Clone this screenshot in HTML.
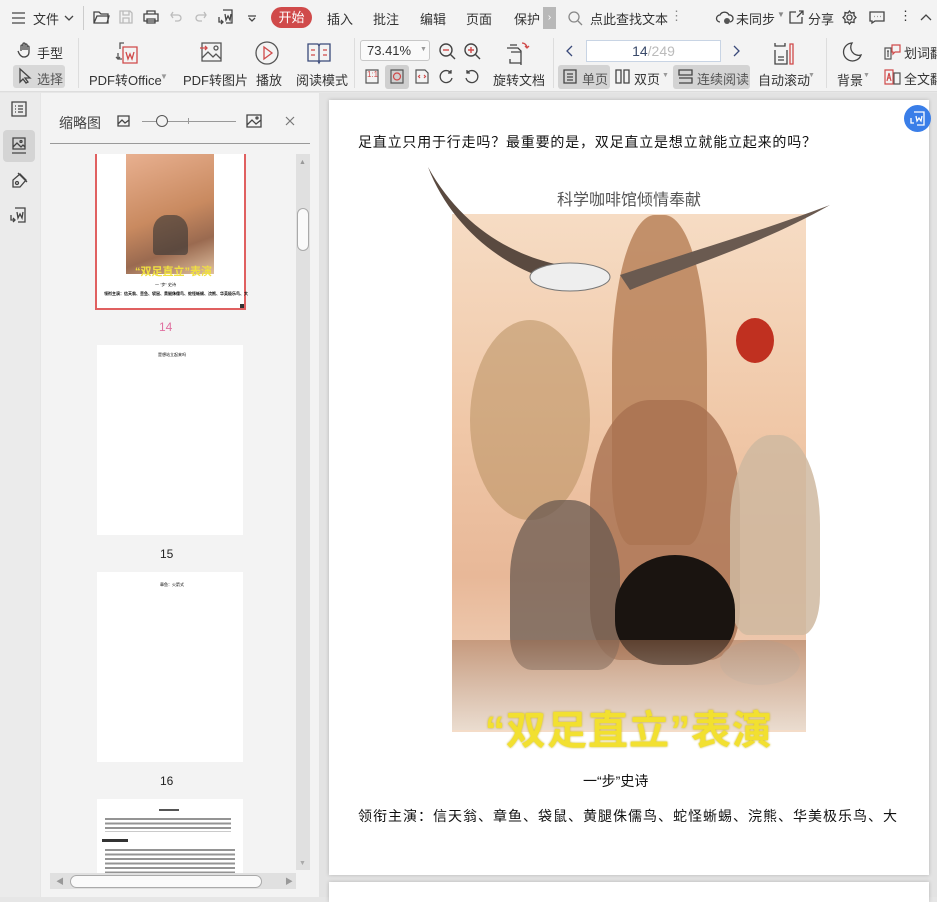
<!DOCTYPE html>
<html><head><meta charset="utf-8">
<style>
*{margin:0;padding:0;box-sizing:border-box}
body{width:937px;height:897px;overflow:hidden;background:#e6e6e6;font-family:"Liberation Sans","Noto Sans CJK SC",sans-serif;color:#333;font-size:13px;position:relative}
.a{position:absolute;white-space:nowrap}
svg{position:absolute;overflow:visible}
.ic{fill:none;stroke:#444;stroke-width:1.3}
</style></head><body>
<!-- top bar -->
<div class="a" style="left:0;top:0;width:937px;height:92px;background:#f3f3f3;border-bottom:1px solid #ddd"></div>
<svg style="left:12px;top:12px" width="14" height="12" class="ic"><path d="M0 1H13M0 6H13M0 11H13"/></svg>
<div class="a" style="left:33px;top:9px">文件</div>
<svg style="left:64px;top:15px" width="10" height="6" class="ic"><path d="M1 1L5 5L9 1"/></svg>
<div class="a" style="left:83px;top:6px;width:1px;height:24px;background:#ccc"></div>
<svg style="left:93px;top:10px" width="17" height="14" class="ic"><path d="M1 2H6L8 4H15V13H1Z M1 13L4 6H16L14 13"/></svg>
<svg style="left:119px;top:10px" width="14" height="14" class="ic"><path stroke="#bbb" d="M1 1H11L13 3V13H1Z M4 1V5H10V1 M4 13V8H10V13"/></svg>
<svg style="left:143px;top:10px" width="16" height="14" class="ic"><path d="M4 4V1H12V4 M1 4H15V11H1Z M4 9H12V13H4Z"/></svg>
<svg style="left:170px;top:11px" width="12" height="11" fill="none" stroke="#bbb" stroke-width="1.3"><path d="M3 1L1 4L3 7 M1 4H8A3 3 0 0 1 8 10H5"/></svg>
<svg style="left:195px;top:11px" width="12" height="11" fill="none" stroke="#bbb" stroke-width="1.3"><path d="M9 1L11 4L9 7 M11 4H4A3 3 0 0 0 4 10H7"/></svg>
<svg style="left:218px;top:9px" width="16" height="16" class="ic"><path d="M5 1H14V14H8 M7 5L8 11L10 7L12 11L13 5 M1 8V13H5 M3 11L5 13L3 15"/></svg>
<svg style="left:247px;top:15px" width="10" height="7" class="ic"><path d="M1 1H9 M2 3L5 6L8 3"/></svg>
<div class="a" style="left:271px;top:7px;width:41px;height:21px;border-radius:11px;background:#d04a4a;color:#fff;text-align:center;line-height:21px;font-size:13px">开始</div>
<div class="a" style="left:327px;top:9px">插入</div>
<div class="a" style="left:373px;top:9px">批注</div>
<div class="a" style="left:420px;top:9px">编辑</div>
<div class="a" style="left:466px;top:9px">页面</div>
<div class="a" style="left:514px;top:9px">保护</div>
<div class="a" style="left:543px;top:7px;width:13px;height:22px;background:#b8b8b8;color:#fff;font-size:10px;text-align:center;line-height:22px">›</div>
<svg style="left:568px;top:11px" width="15" height="15" fill="none" stroke="#888" stroke-width="1.3"><circle cx="6" cy="6" r="5"/><path d="M10 10L14 14"/></svg>
<div class="a" style="left:590px;top:9px">点此查找文本</div>
<div class="a" style="left:670px;top:8px;color:#888">⋮</div>
<svg style="left:716px;top:10px" width="16" height="14" class="ic"><path d="M4 12A3.5 3.5 0 0 1 4 5A5 5 0 0 1 13 5A3.5 3.5 0 0 1 14 12"/><circle cx="11" cy="11" r="3" fill="#555" stroke="none"/></svg>
<div class="a" style="left:736px;top:9px">未同步</div>
<div class="a" style="left:777px;top:10px;font-size:8px;color:#888">▼</div>
<svg style="left:789px;top:10px" width="15" height="14" class="ic"><path d="M7 2H1V13H13V7 M8 7L14 1 M10 1H14V5"/></svg>
<div class="a" style="left:808px;top:9px">分享</div>
<svg style="left:842px;top:10px" width="15" height="15" class="ic"><circle cx="7.5" cy="7.5" r="2.5"/><path d="M7.5 1L9 3L12 2.5L12 5.5L14 7.5L12 9.5L12 12.5L9 12L7.5 14L6 12L3 12.5L3 9.5L1 7.5L3 5.5L3 2.5L6 3Z"/></svg>
<svg style="left:869px;top:11px" width="16" height="13" class="ic"><path d="M1 1H15V10H6L3 12V10H1Z M5 5.5H5.5M8 5.5H8.5M11 5.5H11.5"/></svg>
<div class="a" style="left:899px;top:8px">⋮</div>
<svg style="left:920px;top:14px" width="12" height="7" class="ic"><path d="M1 6L6 1L11 6"/></svg>

<!-- ribbon row -->
<svg style="left:17px;top:42px" width="16" height="16" class="ic"><path d="M4 9V4A1 1 0 0 1 6 4V8V2A1 1 0 0 1 8 2V8V3A1 1 0 0 1 10 3V8V5A1 1 0 0 1 12 5V10C12 13 10 15 7 15C4 15 2 12 1 9"/></svg>
<div class="a" style="left:37px;top:43px">手型</div>
<div class="a" style="left:13px;top:65px;width:52px;height:23px;background:#d8d8d8;border-radius:3px"></div>
<svg style="left:19px;top:68px" width="12" height="16" class="ic"><path d="M1 1V14L4 11L7 15L9 14L6 10H11Z"/></svg>
<div class="a" style="left:37px;top:69px;color:#555">选择</div>
<div class="a" style="left:78px;top:38px;width:1px;height:50px;background:#ddd"></div>
<svg style="left:114px;top:41px" width="26" height="24" fill="none" stroke-width="1.3"><path stroke="#555" d="M6 8V2H10 M4 12V18H8 M2 16L4 18L6 16"/><path stroke="#d04a4a" d="M9 6H23V22H9Z M12 11L14 18L16 13L18 18L20 11"/></svg>
<div class="a" style="left:89px;top:70px">PDF转Office</div>
<div class="a" style="left:160px;top:72px;font-size:8px;color:#999">▼</div>
<svg style="left:200px;top:42px" width="22" height="20" fill="none" stroke-width="1.3"><path stroke="#555" d="M2 1H21V19H2Z M2 16L8 10L13 15L16 12L21 17"/><circle stroke="#555" cx="16" cy="6" r="2"/><path stroke="#d04a4a" d="M0 6H7 M5 4L7 6L5 8"/></svg>
<div class="a" style="left:183px;top:70px">PDF转图片</div>
<svg style="left:255px;top:41px" width="24" height="24" fill="none" stroke-width="1.3"><circle stroke="#555" cx="12" cy="12" r="11"/><path stroke="#d04a4a" d="M9 6L17 12L9 18Z"/></svg>
<div class="a" style="left:256px;top:70px">播放</div>
<svg style="left:307px;top:42px" width="24" height="22" fill="none" stroke-width="1.3"><path stroke="#3a4a7a" d="M1 2H11L12 4L13 2H23V19H13L12 21L11 19H1Z M12 4V19"/><path stroke="#d04a4a" d="M4 8H8M4 13H8M16 8H20M16 13H20"/></svg>
<div class="a" style="left:296px;top:70px">阅读模式</div>
<div class="a" style="left:354px;top:38px;width:1px;height:50px;background:#ddd"></div>
<div class="a" style="left:360px;top:40px;width:70px;height:21px;border:1px solid #c8c8c8;border-radius:3px;background:#fafafa;padding:2px 6px">73.41%</div>
<div class="a" style="left:420px;top:46px;font-size:7px;color:#999">▼</div>
<svg style="left:439px;top:43px" width="18" height="18" fill="none" stroke-width="1.4"><circle stroke="#444" cx="7" cy="7" r="6"/><path stroke="#444" d="M11 11L16 16"/><path stroke="#d04a4a" d="M4 7H10"/></svg>
<svg style="left:464px;top:43px" width="18" height="18" fill="none" stroke-width="1.4"><circle stroke="#444" cx="7" cy="7" r="6"/><path stroke="#444" d="M11 11L16 16"/><path stroke="#d04a4a" d="M4 7H10M7 4V10"/></svg>
<svg style="left:365px;top:69px" width="14" height="15" fill="none" stroke-width="1.2"><path stroke="#555" d="M1 1H13V14H1Z"/></svg><div class="a" style="left:367px;top:70px;font-size:8px;color:#d04a4a">1:1</div>
<div class="a" style="left:385px;top:65px;width:24px;height:24px;background:#cfcfcf;border-radius:3px"></div>
<svg style="left:390px;top:69px" width="14" height="15" fill="none" stroke-width="1.2"><path stroke="#555" d="M1 1H13V14H1Z"/><circle stroke="#d04a4a" cx="7" cy="7.5" r="3.5"/></svg>
<svg style="left:415px;top:69px" width="14" height="15" fill="none" stroke-width="1.2"><path stroke="#555" d="M1 1H10L13 4V14H1Z"/><path stroke="#d04a4a" d="M5 6L3.5 7.5L5 9M9 6L10.5 7.5L9 9"/></svg>
<svg style="left:439px;top:69px" width="15" height="15" class="ic"><path d="M12 4A6 6 0 1 0 13 9 M12 1V4H9"/></svg>
<svg style="left:464px;top:69px" width="15" height="15" class="ic"><path d="M3 4A6 6 0 1 1 2 9 M3 1V4H6"/></svg>
<svg style="left:505px;top:41px" width="26" height="25" class="ic"><path d="M2 7H13L16 10V22H5V18 M5 4H12 M6 11H16V24"/><path stroke="#d04a4a" d="M17 2A5 5 0 0 1 22 7 M20 5L22 7L24 5"/></svg>
<div class="a" style="left:493px;top:70px">旋转文档</div>
<div class="a" style="left:553px;top:38px;width:1px;height:50px;background:#ddd"></div>
<svg style="left:566px;top:45px" width="7" height="12" fill="none" stroke="#3a4a7a" stroke-width="1.3"><path d="M6 1L1 6L6 11"/></svg>
<div class="a" style="left:586px;top:40px;width:135px;height:22px;border:1px solid #c8d4e4;background:#fff;text-align:center;line-height:20px;font-size:14px;color:#3a4a6a">14<span style="color:#bbb">/249</span></div>
<svg style="left:733px;top:45px" width="7" height="12" fill="none" stroke="#3a4a7a" stroke-width="1.3"><path d="M1 1L6 6L1 11"/></svg>
<div class="a" style="left:558px;top:65px;width:52px;height:24px;background:#d3d3d3;border-radius:3px"></div>
<svg style="left:563px;top:69px" width="14" height="15" class="ic"><path d="M1 1H13V14H1Z M4 5H10M4 8H10M4 11H10"/></svg>
<div class="a" style="left:582px;top:69px;color:#555">单页</div>
<svg style="left:615px;top:69px" width="15" height="15" class="ic"><path d="M1 1H6V14H1Z M9 1H14V14H9Z"/></svg>
<div class="a" style="left:634px;top:69px">双页</div>
<div class="a" style="left:662px;top:72px;font-size:7px;color:#999">▼</div>
<div class="a" style="left:673px;top:65px;width:77px;height:24px;background:#d3d3d3;border-radius:3px"></div>
<svg style="left:678px;top:69px" width="15" height="15" class="ic"><path d="M1 1H14V6H1Z M1 9H14V14H1"/></svg>
<div class="a" style="left:697px;top:69px;color:#555">连续阅读</div>
<svg style="left:774px;top:42px" width="20" height="23" fill="none" stroke-width="1.3"><path stroke="#444" d="M1 1V4H11V1 M1 8V22H13V8 M4 15H10M4 18H10"/><path stroke="#d04a4a" d="M16 2H19V22H16Z"/></svg>
<div class="a" style="left:758px;top:70px">自动滚动</div>
<div class="a" style="left:808px;top:72px;font-size:7px;color:#999">▼</div>
<div class="a" style="left:826px;top:38px;width:1px;height:50px;background:#ddd"></div>
<svg style="left:842px;top:42px" width="20" height="21" class="ic"><path d="M10 1A9 9 0 1 0 19 13A8 8 0 0 1 10 1Z"/></svg>
<div class="a" style="left:837px;top:70px">背景</div>
<div class="a" style="left:863px;top:72px;font-size:7px;color:#999">▼</div>
<svg style="left:884px;top:44px" width="17" height="16" fill="none" stroke-width="1.2"><path stroke="#555" d="M1 4H7V15H1Z M3 7H5M4 7V13"/><path stroke="#d04a4a" d="M8 1H16V8H11L9 10V8H8Z"/></svg>
<div class="a" style="left:904px;top:43px">划词翻</div>
<svg style="left:884px;top:69px" width="17" height="16" fill="none" stroke-width="1.2"><path stroke="#d04a4a" d="M1 1H9V15H1Z M3 12L5 4L7 12M3.5 9H6.5"/><path stroke="#555" d="M10 4H16V15H10Z"/></svg>
<div class="a" style="left:904px;top:69px">全文翻</div>

<!-- left icon bar -->
<div class="a" style="left:0;top:93px;width:40px;height:804px;background:#ebebeb"></div>
<svg style="left:11px;top:101px" width="16" height="16" class="ic"><path d="M1 1H15V15H1Z M4 5H5M7 5H12M4 8H5M7 8H12M4 11H5M7 11H12"/></svg>
<div class="a" style="left:3px;top:130px;width:32px;height:32px;background:#d4d4d4;border-radius:4px"></div>
<svg style="left:11px;top:137px" width="16" height="18" class="ic"><path d="M2 1H14V12H2Z M2 10L6 6L10 10L12 8L14 10 M1 16H15"/><circle cx="10" cy="4.5" r="1"/></svg>
<svg style="left:11px;top:172px" width="16" height="17" class="ic"><path d="M9 2L15 8L9 15L2 15L2 8Z M7 1L16 10"/><circle cx="6" cy="11" r="1.5"/></svg>
<svg style="left:10px;top:207px" width="17" height="17" class="ic"><path d="M5 1H15V15H8 M7 5L8 11L10 7L12 11L13 5 M1 8V13H5 M3 11L5 13L3 15"/></svg>

<!-- thumbnail panel -->
<div class="a" style="left:41px;top:93px;width:278px;height:804px;background:#f3f3f3"></div>
<div class="a" style="left:59px;top:113px;font-size:14px;color:#444">缩略图</div>
<svg style="left:117px;top:115px" width="13" height="12" class="ic"><path d="M1 1H12V11H1Z M1 9L5 5L8 8L12 5"/></svg>
<div class="a" style="left:142px;top:121px;width:94px;height:1px;background:#999"></div>
<div class="a" style="left:156px;top:115px;width:12px;height:12px;border-radius:50%;border:1.3px solid #555;background:#f3f3f3"></div>
<div class="a" style="left:188px;top:118px;width:1px;height:6px;background:#999"></div>
<svg style="left:246px;top:114px" width="16" height="14" class="ic"><path d="M1 1H15V13H1Z M1 11L6 6L10 10L15 6"/><circle cx="11" cy="4" r="1"/></svg>
<svg style="left:285px;top:116px" width="10" height="10" fill="none" stroke="#777" stroke-width="1.2"><path d="M1 1L9 9M9 1L1 9"/></svg>
<div class="a" style="left:50px;top:143px;width:260px;height:1px;background:#999"></div>
<div class="a" style="left:296px;top:154px;width:14px;height:716px;background:#e0e0e0"></div>
<div class="a" style="left:299px;top:159px;font-size:7px;color:#999">▲</div>
<div class="a" style="left:297px;top:208px;width:12px;height:43px;background:#fafafa;border:1px solid #aaa;border-radius:6px"></div>
<div class="a" style="left:299px;top:860px;font-size:7px;color:#aaa">▼</div>
<div class="a" style="left:50px;top:873px;width:246px;height:16px;background:#e0e0e0"></div>
<div class="a" style="left:56px;top:876px;font-size:8px;color:#999">◀</div>
<div class="a" style="left:70px;top:875px;width:192px;height:13px;background:#fafafa;border:1px solid #aaa;border-radius:7px"></div>
<div class="a" style="left:285px;top:876px;font-size:8px;color:#999">▶</div>
<!-- thumb 14 -->
<div class="a" style="left:95px;top:154px;width:151px;height:156px;background:#fff;border:2px solid #e06060;border-top:none"></div>
<div class="a" style="left:126px;top:154px;width:88px;height:120px;background:linear-gradient(160deg,#e8b090,#c98a60 50%,#9a6a50 75%,#e0c0a0)"></div>
<div class="a" style="left:153px;top:215px;width:35px;height:40px;background:#333;border-radius:40% 40% 10% 10%;opacity:.6"></div>
<div class="a" style="left:135px;top:263px;font-size:11px;color:#f0e040;font-weight:bold">“双足直立”表演</div>
<div class="a" style="left:155px;top:282px;font-size:4px;color:#000">一 "步" 史诗</div>
<div class="a" style="left:104px;top:291px;font-size:4px;color:#000;font-weight:bold">领衔主演：信天翁、章鱼、袋鼠、黄腿侏儒鸟、蛇怪蜥蜴、浣熊、华美极乐鸟、大</div>
<div class="a" style="left:240px;top:304px;width:4px;height:4px;background:#333"></div>
<div class="a" style="left:159px;top:320px;color:#e070a0;font-size:12px">14</div>
<div class="a" style="left:97px;top:345px;width:146px;height:190px;background:#fff"></div>
<div class="a" style="left:158px;top:352px;font-size:4px;color:#000">是想站立起来吗</div>
<div class="a" style="left:160px;top:547px;color:#222;font-size:12px">15</div>
<div class="a" style="left:97px;top:572px;width:146px;height:190px;background:#fff"></div>
<div class="a" style="left:160px;top:582px;font-size:4px;color:#000">章鱼：火箭式</div>
<div class="a" style="left:160px;top:774px;color:#222;font-size:12px">16</div>
<div class="a" style="left:97px;top:799px;width:146px;height:74px;background:#fff;overflow:hidden">
<div style="position:absolute;left:62px;top:10px;width:20px;height:2px;background:#555"></div>
<div style="position:absolute;left:8px;top:19px;width:126px;height:14px;background:repeating-linear-gradient(#666 0 2px,transparent 2px 4.5px);opacity:.7"></div>
<div style="position:absolute;left:5px;top:40px;width:26px;height:3px;background:#333"></div>
<div style="position:absolute;left:8px;top:50px;width:130px;height:24px;background:repeating-linear-gradient(#666 0 2px,transparent 2px 4.5px);opacity:.7"></div>
</div>

<!-- page area -->
<div class="a" style="left:319px;top:93px;width:618px;height:804px;background:#e3e3e3"></div>
<div class="a" style="left:329px;top:100px;width:600px;height:775px;background:#fff;box-shadow:0 0 4px rgba(0,0,0,.2)"></div>
<div class="a" style="left:329px;top:882px;width:600px;height:20px;background:#fff;box-shadow:0 0 4px rgba(0,0,0,.2)"></div>
<div class="a" style="left:904px;top:105px;width:27px;height:27px;border-radius:50%;background:#3a7ee8"></div>
<svg style="left:910px;top:111px" width="15" height="15" fill="none" stroke="#fff" stroke-width="1.3"><path d="M4 1H14V14H7 M6 5L7 10L9 7L11 10L12 5 M1 7V12H4"/></svg>
<div class="a" style="left:358px;top:132px;font-size:14px;color:#111;letter-spacing:0.8px">足直立只用于行走吗？最重要的是，双足直立是想立就能立起来的吗？</div>
<!-- illustration -->
<div class="a" style="left:452px;top:214px;width:354px;height:518px;background:linear-gradient(180deg,#f6dcc4 0%,#f0c8a8 40%,#e8b898 70%,#f4dcc8 100%)"></div>
<div class="a" style="left:612px;top:215px;width:95px;height:330px;background:#b8825a;border-radius:45% 45% 20% 20%;opacity:.85"></div>
<div class="a" style="left:590px;top:400px;width:150px;height:260px;background:#a87050;border-radius:40% 40% 20% 20%;opacity:.8"></div>
<div class="a" style="left:470px;top:320px;width:120px;height:200px;background:#b89060;border-radius:50%;opacity:.55"></div>
<div class="a" style="left:730px;top:435px;width:90px;height:200px;background:#cfb8a0;border-radius:45% 45% 20% 20%;opacity:.85"></div>
<div class="a" style="left:510px;top:500px;width:110px;height:170px;background:#6a5a50;border-radius:45% 45% 20% 20%;opacity:.75"></div>
<div class="a" style="left:615px;top:555px;width:120px;height:110px;background:#1a1410;border-radius:50% 50% 40% 40%"></div>
<div class="a" style="left:720px;top:640px;width:80px;height:45px;background:#d8c8b8;border-radius:50%;opacity:.8"></div>
<div class="a" style="left:736px;top:318px;width:38px;height:45px;background:#c03020;border-radius:50%"></div>
<svg style="left:420px;top:165px" width="420" height="160"><path d="M8 2C40 60 90 90 140 100L130 115C80 100 30 60 8 2Z" fill="#5a4a40"/><path d="M410 40C330 70 260 90 200 110L210 125C270 100 340 80 410 40Z" fill="#6a5a50"/><ellipse cx="150" cy="112" rx="40" ry="14" fill="#eee" stroke="#777"/></svg>
<div class="a" style="left:452px;top:640px;width:354px;height:90px;background:linear-gradient(180deg,rgba(160,110,80,.5),rgba(230,220,210,.7))"></div>
<div class="a" style="left:557px;top:186px;font-size:16px;color:#555">科学咖啡馆倾情奉献</div>
<div class="a" style="left:485px;top:698px;font-size:40px;font-weight:bold;color:#f2e030;letter-spacing:1px;text-shadow:0 0 2px #c8b020">“双足直立”表演</div>
<div class="a" style="left:583px;top:771px;font-size:14px;color:#111">一“步”史诗</div>
<div class="a" style="left:358px;top:806px;font-size:14px;color:#111;letter-spacing:1px">领衔主演：信天翁、章鱼、袋鼠、黄腿侏儒鸟、蛇怪蜥蜴、浣熊、华美极乐鸟、大</div>
</body></html>
